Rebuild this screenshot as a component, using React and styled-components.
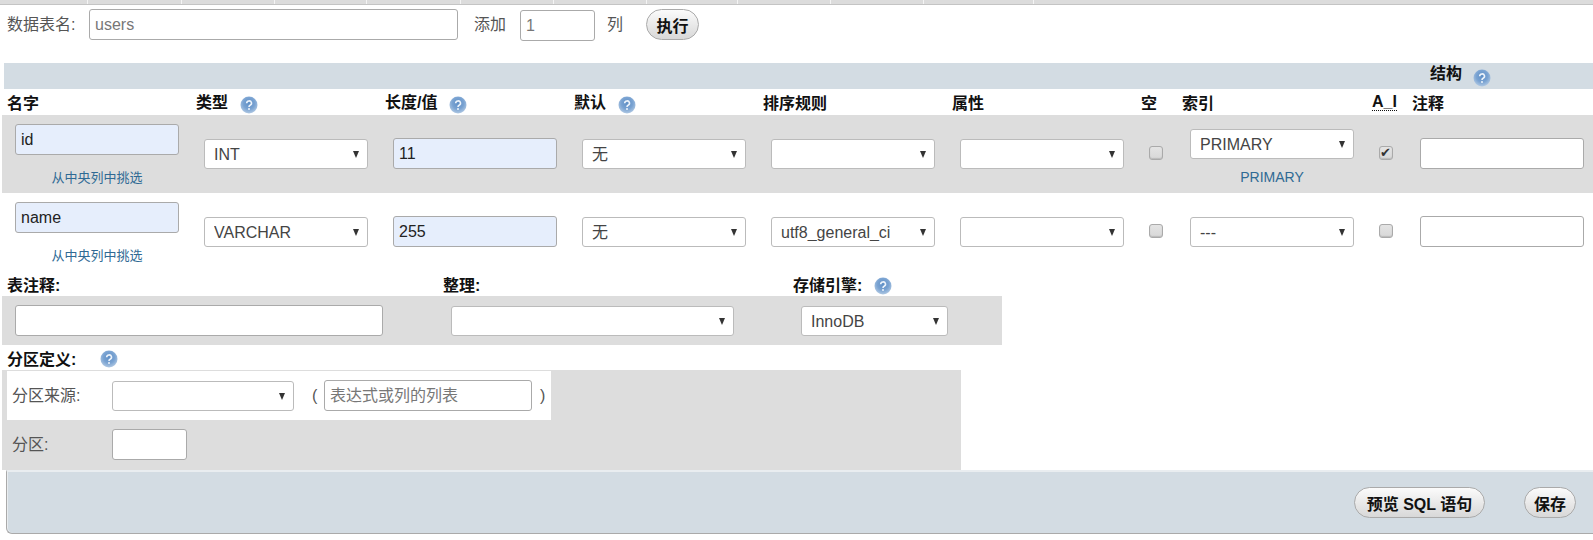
import React from "react";
import styled, { createGlobalStyle } from "styled-components";

const FONT = `"Liberation Sans", "Noto Sans CJK SC", sans-serif`;

const Global = createGlobalStyle`
  html, body { margin: 0; padding: 0; background: #fff; }
  body { font-family: ${FONT}; font-size: 16px; color: #444; overflow: hidden; }
  * { box-sizing: border-box; }
`;

const Page = styled.div`
  width: 1593px;
  height: 540px;
`;

const TabStrip = styled.div`
  display: flex;
  height: 5px;
  background: #dcdcdc;
  border-bottom: 1px solid #c4c4c4;
`;
const TabStub = styled.div`
  width: ${(p) => p.$w}px;
  height: 100%;
  border-right: 1px solid #f4f4f4;
`;

const NameBar = styled.div`
  display: flex;
  align-items: flex-start;
  height: 58px;
  padding: 4px 0 0 7px;
`;
const BarLabel = styled.span`
  width: ${(p) => p.$w}px;
  margin-left: ${(p) => p.$ml || 0}px;
  line-height: 32px;
  color: #555;
  white-space: nowrap;
`;

const TextInput = styled.input`
  display: block;
  width: ${(p) => p.$w || 164}px;
  height: 31px;
  margin: ${(p) => p.$m || "0"};
  padding: 0 5px;
  font: 16px ${FONT};
  color: ${(p) => (p.$muted ? "#777" : "#222")};
  background: ${(p) => (p.$blue ? "#e6eefc" : "#fff")};
  border: 1px solid #aaa;
  border-radius: 3px;
  outline: none;
  &::placeholder { color: #777; opacity: 1; }
`;

const RoundButton = styled.button`
  height: 31px;
  width: ${(p) => p.$w}px;
  padding: 0;
  font: bold 16px ${FONT};
  color: #111;
  background: linear-gradient(#fbfbfb, #d8d8d8);
  border: 1px solid #aaa;
  border-radius: 16px;
  white-space: pre;
`;

const BandTitle = styled.div`
  display: flex;
  align-items: center;
  height: 26px;
  margin-left: 4px;
  padding: 2px 0 0 1426px;
  background: #d3dce3;
  font-weight: bold;
  color: #111;
`;
const BandText = styled.span`
  line-height: 24px;
  margin-top: -6px;
`;

const Grid = styled.div`
  display: grid;
  grid-template-columns: 189px 189px 189px 189px 189px 189px 41px 190px 40px 1fr;
  height: ${(p) => p.$h}px;
  margin-left: 2px;
  padding-left: 5px;
  background: ${(p) => (p.$grey ? "#dddddd" : "transparent")};
`;

const Head = styled.div`
  display: flex;
  align-items: center;
  height: 26px;
  font-weight: bold;
  color: #111;
  white-space: nowrap;
`;
const HeadText = styled.span`
  margin-top: ${(p) => (p.$up ? -3 : 0)}px;
`;
const Abbr = styled.span`
  line-height: 16px;
  border-bottom: 1px dotted #111;
`;

const HelpIconSvg = styled.svg`
  flex: none;
  width: 18px;
  height: 18px;
  margin-left: ${(p) => p.$ml}px;
  margin-top: ${(p) => p.$mt}px;
`;
const HelpIcon = ({ ml, mt = 1 }) => (
  <HelpIconSvg $ml={ml} $mt={mt} viewBox="0 0 18 18">
    <defs>
      <radialGradient id="hg" cx="50%" cy="40%" r="62%">
        <stop offset="0" stopColor="#5f8fc6" />
        <stop offset="0.55" stopColor="#7aa3d2" />
        <stop offset="1" stopColor="#b4cbe4" />
      </radialGradient>
    </defs>
    <circle cx="9" cy="9" r="8.5" fill="url(#hg)" />
    <path d="M6.7 7.2a2.4 2.3 0 1 1 3.4 2.1c-.8.4-1.1.8-1.1 1.6" fill="none" stroke="#eef4fb" strokeWidth="1.6" />
    <circle cx="9" cy="13.1" r="1" fill="#eef4fb" />
  </HelpIconSvg>
);

const Cell = styled.div`
  padding: ${(p) => p.$top || 0}px 0 0 ${(p) => p.$left ?? 8}px;
`;

const SmallLink = styled.div`
  width: 164px;
  margin-top: ${(p) => p.$mt}px;
  text-align: center;
  font-size: ${(p) => p.$fs || 13}px;
  line-height: 18px;
  color: #2f6a94;
`;

const SelectWrap = styled.div`
  position: relative;
  width: ${(p) => p.$w || 164}px;
  height: 30px;
  &::after {
    content: "";
    position: absolute;
    top: 12px;
    right: 9px;
    border-style: solid;
    border-width: 7px 3.5px 0;
    border-color: #333 transparent transparent;
    pointer-events: none;
  }
`;
const NativeSelect = styled.select`
  appearance: none;
  width: 100%;
  height: 100%;
  padding: 0 20px 0 9px;
  font: 16px ${FONT};
  color: #444;
  background: #fff;
  border: 1px solid #bbb;
  border-radius: 3px;
  outline: none;
`;
const Select = ({ w, value = "" }) => (
  <SelectWrap $w={w}>
    <NativeSelect defaultValue={value}>
      <option value={value}>{value}</option>
    </NativeSelect>
  </SelectWrap>
);

const Check = styled.input.attrs({ type: "checkbox" })`
  appearance: none;
  display: block;
  position: relative;
  width: 14px;
  height: 14px;
  margin: 0;
  background: linear-gradient(#e4e4e4, #d8d8d8);
  border: 1px solid #aaa;
  border-radius: 3px;
  box-shadow: inset 0 -1px 1px #bbb;
  &:checked::before {
    content: "✔";
    position: absolute;
    left: 0;
    top: -3px;
    font: 13px/17px "DejaVu Sans", sans-serif;
    color: #333;
  }
`;

const FormGrid = styled.div`
  display: grid;
  grid-template-columns: 436px 350px 1fr;
  width: ${(p) => p.$w}px;
  height: ${(p) => p.$h}px;
  margin-left: 2px;
  padding-left: 5px;
  background: ${(p) => (p.$grey ? "#dddddd" : "transparent")};
`;

const SectionHead = styled.div`
  display: flex;
  align-items: center;
  height: 25px;
  padding-left: 7px;
  font-weight: bold;
  color: #111;
`;

const PartitionBlock = styled.div`
  width: 959px;
  height: 100px;
  margin-left: 2px;
  padding-top: 1px;
  background: #dddddd;
`;
const PartitionRow = styled.div`
  display: flex;
  align-items: center;
  width: 544px;
  height: 49px;
  margin-left: 5px;
  padding-left: 5px;
  background: #fff;
`;
const PartitionCount = styled.div`
  display: flex;
  align-items: flex-start;
  height: 50px;
  padding: 9px 0 0 10px;
`;
const FieldLabel = styled.span`
  width: 100px;
  line-height: 31px;
  color: #555;
  white-space: nowrap;
`;
const Paren = styled.span`
  width: ${(p) => p.$w}px;
  padding-left: ${(p) => p.$l}px;
  color: #555;
`;

const Footer = styled.div`
  display: flex;
  justify-content: flex-end;
  gap: 39px;
  height: 64px;
  margin-left: 6px;
  padding: 15px 17px 0 0;
  background: #d3dce3;
  border-top: 2px solid #e9edf0;
  border-left: 1px solid #aaa;
  border-bottom: 1px solid #aaa;
  border-bottom-left-radius: 6px;
  box-shadow: inset 1px 0 0 #e9edf0;
`;

const tabs = [88, 94, 93, 92, 94, 93, 93, 91, 93, 93, 110];
const columns = [
  ["名字"], ["类型", true], ["长度/值", true], ["默认", true], ["排序规则"], ["属性"], ["空"], ["索引"],
];

function FieldRow({ grey, name, type, collation, index, indexLabel, ai }) {
  return (
    <Grid $h={78} $grey={grey}>
      <Cell $top={9}>
        <TextInput $blue defaultValue={name} />
        <SmallLink $mt={14}>从中央列中挑选</SmallLink>
      </Cell>
      <Cell $top={24}><Select value={type} /></Cell>
      <Cell $top={23}><TextInput $blue defaultValue={type === "INT" ? "11" : "255"} /></Cell>
      <Cell $top={24}><Select value="无" /></Cell>
      <Cell $top={24}><Select value={collation} /></Cell>
      <Cell $top={24}><Select /></Cell>
      <Cell $top={31}><Check /></Cell>
      <Cell $top={indexLabel ? 14 : 24}>
        <Select value={index} />
        {indexLabel && <SmallLink $mt={9} $fs={14}>{indexLabel}</SmallLink>}
      </Cell>
      <Cell $top={31} $left={7}><Check defaultChecked={ai} /></Cell>
      <Cell $top={23}><TextInput /></Cell>
    </Grid>
  );
}

export default function App() {
  return (
    <Page>
      <Global />
      <TabStrip>
        {tabs.map((w, i) => <TabStub key={i} $w={w} />)}
      </TabStrip>

      <NameBar>
        <BarLabel $w={82}>数据表名:</BarLabel>
        <TextInput $w={369} $muted defaultValue="users" />
        <BarLabel $w={46} $ml={16}>添加</BarLabel>
        <TextInput $w={75} $m="1px 0 0" $muted defaultValue="1" />
        <BarLabel $w={39} $ml={12}>列</BarLabel>
        <RoundButton $w={53}>执行</RoundButton>
      </NameBar>

      <BandTitle>
        <BandText>结构</BandText>
        <HelpIcon ml={11} />
      </BandTitle>

      <Grid $h={26}>
        {columns.map(([label, help]) => (
          <Head key={label}>
            <HeadText $up={help}>{label}</HeadText>
            {help && <HelpIcon ml={12} mt={5} />}
          </Head>
        ))}
        <Head><Abbr>A_I</Abbr></Head>
        <Head>注释</Head>
      </Grid>

      <FieldRow grey name="id" type="INT" collation="" index="PRIMARY" indexLabel="PRIMARY" ai />
      <FieldRow name="name" type="VARCHAR" collation="utf8_general_ci" index="---" />

      <FormGrid $w={1000} $h={25}>
        <Head>表注释:</Head>
        <Head>整理:</Head>
        <Head>存储引擎:<HelpIcon ml={12} mt={3} /></Head>
      </FormGrid>
      <FormGrid $w={1000} $h={49} $grey>
        <Cell $top={9}><TextInput $w={368} /></Cell>
        <Cell $top={10}><Select w={283} /></Cell>
        <Cell $top={10}><Select w={147} value="InnoDB" /></Cell>
      </FormGrid>

      <SectionHead>分区定义:<HelpIcon ml={24} mt={3} /></SectionHead>
      <PartitionBlock>
        <PartitionRow>
          <FieldLabel>分区来源:</FieldLabel>
          <Select w={182} />
          <Paren $w={30} $l={18}>(</Paren>
          <TextInput $w={208} placeholder="表达式或列的列表" />
          <Paren $w={19} $l={8}>)</Paren>
        </PartitionRow>
        <PartitionCount>
          <FieldLabel>分区:</FieldLabel>
          <TextInput $w={75} />
        </PartitionCount>
      </PartitionBlock>

      <Footer>
        <RoundButton $w={131}>预览 SQL 语句</RoundButton>
        <RoundButton $w={52}>保存</RoundButton>
      </Footer>
    </Page>
  );
}
